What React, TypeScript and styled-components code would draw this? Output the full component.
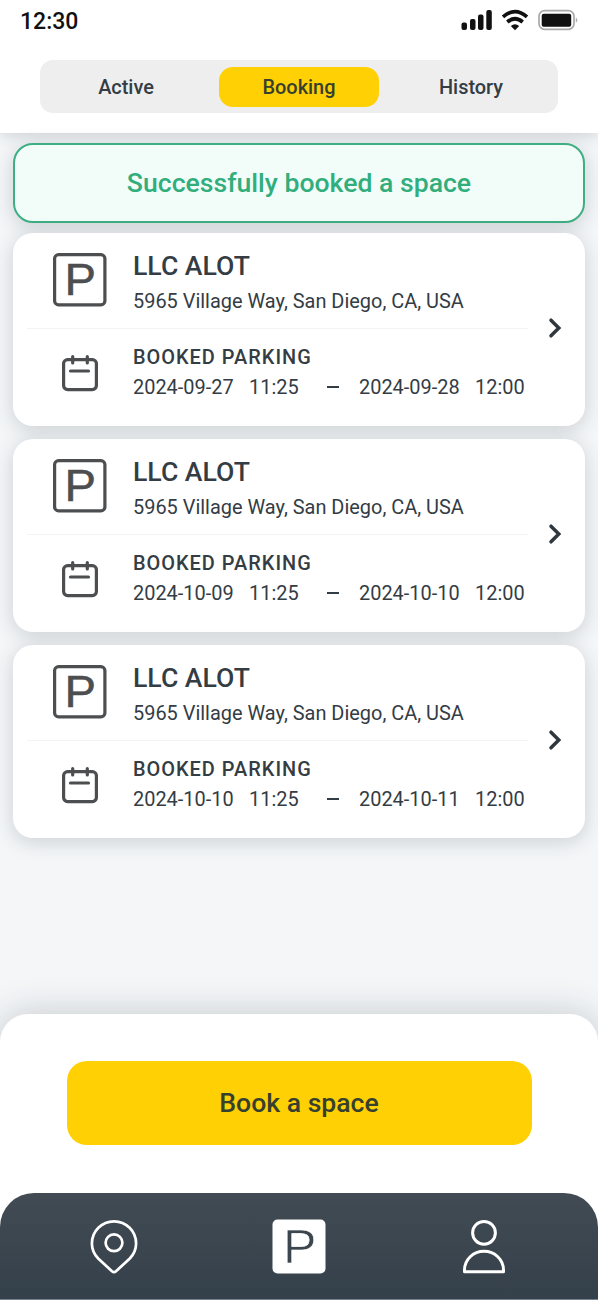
import React from "react";
import styled, { createGlobalStyle } from "styled-components";

const GlobalStyle = createGlobalStyle`
  * { box-sizing: border-box; }
  body { margin: 0; background: #f4f6f8; font-family: Roboto, "Liberation Sans", sans-serif; color: #343c44; }
  button { border: 0; padding: 0; background: none; font: inherit; color: inherit; }
`;

const Screen = styled.div`
  width: 598px;
  height: 1300px;
  display: flex;
  flex-direction: column;
  overflow: hidden;
  background: #f4f6f8;
`;

const Header = styled.header`
  height: 133px;
  flex: none;
  background: #fff;
  box-shadow: 0 2px 14px rgba(44, 58, 72, 0.2);
`;

const StatusBar = styled.div`
  height: 60px;
  display: flex;
  justify-content: space-between;
  align-items: flex-start;
  padding: 7px 19px 0 20px;
`;

const Clock = styled.span`
  padding-top: 1px;
  font-size: 23px;
  line-height: 28px;
  font-weight: 500;
  color: #111;
`;

const Tabs = styled.nav`
  width: 518px;
  height: 53px;
  margin: 0 0 0 40px;
  padding: 6px 6px;
  display: grid;
  grid-template-columns: 160px 160px 158px;
  column-gap: 13px;
  background: #eee;
  border-radius: 13px;
`;

const Tab = styled.button<{ $active?: boolean }>`
  height: 40px;
  margin-top: 0.5px;
  padding-top: 1px;
  border-radius: 14px;
  font-size: 19.93px;
  font-weight: 500;
  background: ${(p) => (p.$active ? "#ffd004" : "transparent")};
  color: ${(p) => (p.$active ? "#36402f" : "#343c44")};
`;

const Content = styled.main`
  flex: 1;
  padding: 10px 13px 0;
`;

const Banner = styled.div`
  height: 80px;
  display: flex;
  align-items: center;
  justify-content: center;
  border: 2px solid #3fae83;
  border-radius: 20px;
  background: #f2fdf9;
  color: #31ae7c;
  font-size: 26.6px;
  line-height: 32px;
  font-weight: 500;
  box-shadow: 0 4px 20px rgba(44, 58, 72, 0.2);
  margin-bottom: 10px;
`;

const Card = styled.article`
  height: 193px;
  margin-bottom: 13px;
  padding: 0 14px;
  display: flex;
  align-items: center;
  border-radius: 20px;
  background: #fff;
  box-shadow: 0 4px 20px rgba(44, 58, 72, 0.2);
`;

const Details = styled.div`
  width: 501px;
  height: 193px;
  flex: none;
`;

const Section = styled.div<{ $height: number; $divided?: boolean }>`
  height: ${(p) => p.$height}px;
  display: grid;
  grid-template-columns: 106px 1fr;
  border-bottom: ${(p) => (p.$divided ? "1px solid #f2f3f4" : "0")};
`;

const IconSlot = styled.div<{ $top: number }>`
  padding: ${(p) => p.$top}px 0 0;
  display: flex;
  justify-content: center;
  align-items: flex-start;
`;

const Name = styled.h2`
  margin: 16px 0 0;
  font-size: 26.6px;
  line-height: 34px;
  font-weight: 500;
`;

const Address = styled.p`
  margin: 7px 0 0;
  font-size: 19.93px;
  line-height: 24px;
`;

const Label = styled.h3`
  margin: 17px 0 0;
  font-size: 19.93px;
  line-height: 24px;
  font-weight: 500;
  letter-spacing: 1px;
`;

const Period = styled.div`
  margin-top: 6px;
  display: grid;
  grid-template-columns: 116px 78px 32px 116px 1fr;
  font-size: 19.93px;
  line-height: 24px;
  white-space: nowrap;
`;

const Dash = styled.span`
  width: 12px;
  height: 2px;
  margin-top: 10px;
  background: #343c44;
`;

const Arrow = styled.svg`
  margin: 0 0 4px 19px;
  display: block;
`;

const Sheet = styled.section`
  height: 286px;
  flex: none;
  display: flex;
  flex-direction: column;
  justify-content: space-between;
  align-items: center;
  padding-top: 47px;
  border-radius: 28px 28px 0 0;
  background: #fff;
  box-shadow: 0 0 36px rgba(44, 58, 72, 0.24);
`;

const BookButton = styled.button`
  width: 465px;
  height: 84px;
  border-radius: 20px;
  background: #ffd004;
  color: #36402f;
  font-size: 26.6px;
  line-height: 32px;
  font-weight: 500;
`;

const BottomNav = styled.nav`
  width: 598px;
  height: 107px;
  display: grid;
  grid-template-columns: 227px 144px 226px;
  justify-items: center;
  padding-top: 26px;
  border-radius: 34px 34px 0 0;
  border-bottom: 1px solid #75808a;
  background: linear-gradient(#424b54, #34404a);
`;

const StatusIcons = () => (
  <svg width="120" height="28" viewBox="459 7 120 28" fill="none">
    <g fill="#111">
      <rect x="461.5" y="22.5" width="5.5" height="7.5" rx="2" />
      <rect x="470" y="19" width="5.5" height="11" rx="2" />
      <rect x="478" y="14.5" width="5.5" height="15.5" rx="2" />
      <rect x="486.3" y="10" width="5.5" height="20" rx="2" />
    </g>
    <path d="M503 16.800Q515 6.400 527 16.800" stroke="#111" strokeWidth="3.7" />
    <path d="M507.300 22Q515 15.500 522.700 22" stroke="#111" strokeWidth="3.7" />
    <path d="M510.800 26Q515 22.600 519.200 26L515 30.200Z" fill="#111" />
    <rect x="539" y="10.700" width="35" height="18.600" rx="5.500" stroke="#aaa" strokeWidth="1.700" />
    <rect x="541.700" y="13.700" width="29.500" height="13" rx="2" fill="#111" />
    <path d="M575.800 17.500Q579 20 575.800 22.800Z" fill="#aaa" />
  </svg>
);

const ParkingIcon = () => (
  <svg width="54" height="54" viewBox="0 0 54 54">
    <rect x="1.600" y="1.600" width="50.300" height="50.300" rx="4" fill="none" stroke="#4c4e50" strokeWidth="3.200" />
    <text x="11.400" y="42.400" fontFamily="Liberation Sans" fontSize="45" textLength="31.500" lengthAdjust="spacingAndGlyphs" fill="#4c4e50" stroke="#4c4e50" strokeWidth="0.500">P</text>
  </svg>
);

const CalendarIcon = () => (
  <svg width="38" height="38" viewBox="0 0 38 38" fill="none" stroke="#4c4e50" strokeWidth="3.200" strokeLinecap="round">
    <rect x="2.600" y="5.600" width="32.800" height="30" rx="4" />
    <path d="M11.700 2.500V9M26.300 2.500V9M9.500 17H27.500" />
  </svg>
);

const PinIcon = () => (
  <svg width="50" height="56" viewBox="0 0 50 56" fill="none" stroke="#fff" strokeWidth="2.700">
    <path d="M9.200 39.500C4.500 34.500 2.900 29.800 2.900 24.400A22.100 22.100 0 0 1 47.100 24.400C47.100 29.800 45.500 34.500 40.800 39.500L27 52.300Q25 54 23 52.300Z" />
    <circle cx="25" cy="23.800" r="8.400" />
  </svg>
);

const ParkingFilledIcon = () => (
  <svg width="54" height="56" viewBox="0 0 54 56">
    <rect x="0.500" y="0.500" width="53" height="54" rx="5" fill="#fff" />
    <text x="11" y="44.300" fontFamily="Liberation Sans" fontSize="48" textLength="33.500" lengthAdjust="spacingAndGlyphs" fill="#3c464f" stroke="#fff" strokeWidth="0.700">P</text>
  </svg>
);

const PersonIcon = () => (
  <svg width="46" height="56" viewBox="0 0 46 56" fill="none" stroke="#fff" strokeWidth="3" strokeLinejoin="round">
    <circle cx="23" cy="13.800" r="11.400" />
    <path d="M3.500 52.800V51A19.500 18.800 0 0 1 42.500 51V52.800Z" />
  </svg>
);

const bookings = [
  { from: "2024-09-27", to: "2024-09-28" },
  { from: "2024-10-09", to: "2024-10-10" },
  { from: "2024-10-10", to: "2024-10-11" },
];

const BookingCard = ({ from, to }: { from: string; to: string }) => (
  <Card>
    <Details>
      <Section $height={96} $divided>
        <IconSlot $top={19.5}><ParkingIcon /></IconSlot>
        <div>
          <Name>LLC ALOT</Name>
          <Address>5965 Village Way, San Diego, CA, USA</Address>
        </div>
      </Section>
      <Section $height={97}>
        <IconSlot $top={24.5}><CalendarIcon /></IconSlot>
        <div>
          <Label>BOOKED PARKING</Label>
          <Period>
            <span>{from}</span>
            <span>11:25</span>
            <Dash />
            <span>{to}</span>
            <span>12:00</span>
          </Period>
        </div>
      </Section>
    </Details>
    <Arrow width="16" height="24" viewBox="0 0 16 24" fill="none" stroke="#30383e" strokeWidth="3.500" strokeLinecap="round">
      <path d="M4 4.200L11.800 12L4 19.800" />
    </Arrow>
  </Card>
);

export default function App() {
  return (
    <Screen>
      <GlobalStyle />
      <Header>
        <StatusBar>
          <Clock>12:30</Clock>
          <StatusIcons />
        </StatusBar>
        <Tabs>
          <Tab>Active</Tab>
          <Tab $active>Booking</Tab>
          <Tab>History</Tab>
        </Tabs>
      </Header>
      <Content>
        <Banner>Successfully booked a space</Banner>
        {bookings.map((b) => (
          <BookingCard key={b.from} {...b} />
        ))}
      </Content>
      <Sheet>
        <BookButton>Book a space</BookButton>
        <BottomNav>
          <PinIcon />
          <ParkingFilledIcon />
          <PersonIcon />
        </BottomNav>
      </Sheet>
    </Screen>
  );
}
